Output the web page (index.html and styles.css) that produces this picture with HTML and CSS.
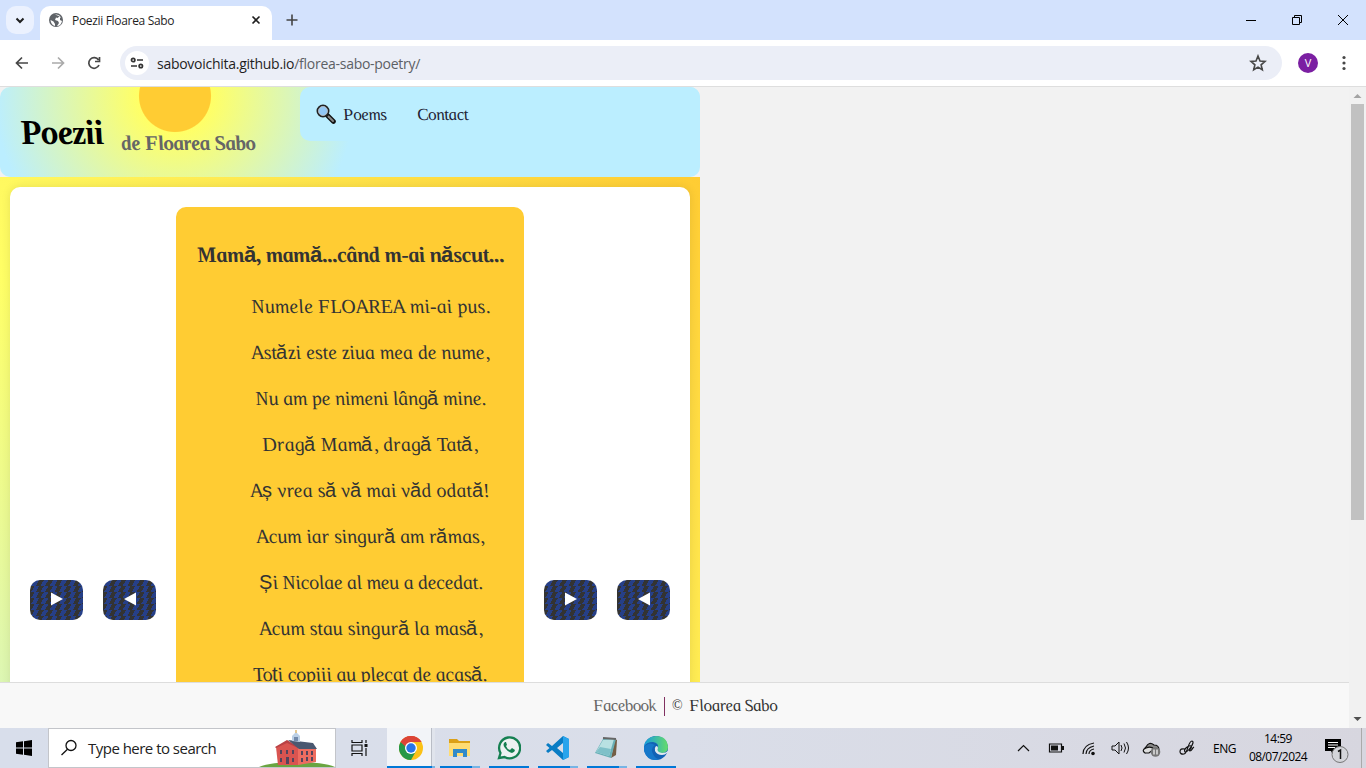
FILE: index.html
```html
<!DOCTYPE html>
<html lang="ro">
<head>
<meta charset="utf-8">
<title>Poezii Floarea Sabo</title>
<link rel="stylesheet" href="styles.css">
</head>
<body>
<div class="tabs">
  <div class="tab-search"><svg width="28" height="28"><path d="M10.500 12.500l3.500 3.500 3.500-3.500" fill="none" stroke="#1f1f1f" stroke-width="2"/></svg></div>
  <div class="tab">
    <svg class="globe" width="14" height="14"><circle cx="7" cy="7" r="7" fill="#5f6368"/><path d="M6 1.5Q9 1 11 3L8.5 5 7 4.5 6 7l3 1 1 2-2 3q4 0 5-5l-2-1V5l1-1M1.5 7l3 1.5L6 11v2Q2 12 1.5 7" fill="#fff"/></svg>
    <span class="tab-title">Poezii Floarea Sabo</span>
    <svg class="tab-x" width="10" height="10"><path d="M1.5 1.5l7 7m0-7l-7 7" stroke="#1f1f1f" stroke-width="1.6"/></svg>
  </div>
  <svg class="plus" width="12" height="12"><path d="M6 .5v11M.5 6h11" stroke="#444" stroke-width="1.6"/></svg>
  <svg class="winctl" width="120" height="40" fill="none" stroke="#000"><path d="M10 20.500h10M102 15l10 10m0-10l-10 10"/><path d="M56.500 17.500h7v7h-7zM58.500 17v-1.500h7v7h-1.500"/></svg>
</div>
<div class="toolbar">
  <svg class="navicons" width="92" height="20" fill="none" stroke="#474747" stroke-width="1.7"><path d="M13 10H1.500M7 4.500L1.500 10 7 15.500"/><path d="M37 10h11.500M43 4.500l5.500 5.500-5.500 5.500" stroke="#aaa"/><path d="M83.500 7A5.300 5.300 0 1 0 84 12M84.500 4v4.500H80"/></svg>
  <div class="omnibox">
    <div class="tune"><svg width="14" height="12" fill="none" stroke="#333" stroke-width="1.700"><circle cx="3.200" cy="3" r="1.700"/><path d="M7 3h6M1 9h6"/><circle cx="10.800" cy="9" r="1.700"/></svg></div>
    <span class="url">sabovoichita.github.io<span class="path">/florea-sabo-poetry/</span></span>
    <svg class="star" width="18" height="18"><path d="M9 2l2 5 5 .4-3.900 3.400 1.200 5L9 13.100l-4.300 2.700 1.200-5L2 7.400 7 7z" fill="none" stroke="#474747" stroke-width="1.600"/></svg>
  </div>
  <span class="avatar">V</span>
  <svg class="dots" width="6" height="18" fill="#474747"><circle cx="3" cy="3.500" r="1.600"/><circle cx="3" cy="9" r="1.600"/><circle cx="3" cy="14.500" r="1.600"/></svg>
</div>
<div class="viewport">
  <div class="page">
    <div class="content">
      <header class="head">
        <h1 class="brand"><span class="script">Poezii</span></h1>
        <h2 class="author"><span class="script">de Floarea Sabo</span></h2>
        <nav class="nav">
          <svg width="20" height="20"><path d="M11.500 11.500l6 6" stroke="#111" stroke-width="4.600" stroke-linecap="round"/><path d="M12.500 12.500l4.500 4.500" stroke="#888" stroke-width="2" stroke-linecap="round"/><circle cx="7" cy="7" r="5.600" fill="#92c7f5" stroke="#222" stroke-width="1.800"/><circle cx="7" cy="7" r="4.500" fill="none" stroke="#bbb" stroke-width=".8"/></svg>
          <a class="link poems"><span class="script">Poems</span></a><a class="link contact"><span class="script">Contact</span></a>
        </nav>
      </header>
      <main class="main">
        <div class="card">
          <div class="buttons"><button class="btn"><svg width="12" height="14"><path d="M0 .5v13L12 7z" fill="#fff"/></svg></button><button class="btn"><svg width="12" height="14"><path d="M12 .5v13L0 7z" fill="#fff"/></svg></button></div>
          <article class="poem">
            <h3 class="poem-title"><span class="script">Mam<i>ă</i>, mam<i>ă</i>...când m-ai n<i>ă</i>scut...</span></h3>
            <p class="line l1"><span class="script">Numele FLOAREA mi-ai pus.</span></p>
            <p class="line l2"><span class="script">Ast<i>ă</i>zi este ziua mea de nume,</span></p>
            <p class="line l3"><span class="script">Nu am pe nimeni lâng<i>ă</i> mine.</span></p>
            <p class="line l4"><span class="script">Drag<i>ă</i> Mam<i>ă</i>, drag<i>ă</i> Tat<i>ă</i>,</span></p>
            <p class="line l5"><span class="script">A<i>ș</i> vrea s<i>ă</i> v<i>ă</i> mai v<i>ă</i>d odat<i>ă</i>!</span></p>
            <p class="line l6"><span class="script">Acum iar singur<i>ă</i> am r<i>ă</i>mas,</span></p>
            <p class="line l7"><span class="script"><i>Ș</i>i Nicolae al meu a decedat.</span></p>
            <p class="line l8"><span class="script">Acum stau singur<i>ă</i> la mas<i>ă</i>,</span></p>
            <p class="line l9"><span class="script">To<i>ț</i>i copiii au plecat de acas<i>ă</i>.</span></p>
          </article>
          <div class="buttons"><button class="btn"><svg width="12" height="14"><path d="M0 .5v13L12 7z" fill="#fff"/></svg></button><button class="btn"><svg width="12" height="14"><path d="M12 .5v13L0 7z" fill="#fff"/></svg></button></div>
        </div>
      </main>
    </div>
    <footer class="foot"><a class="fb"><span class="script">Facebook</span></a><span class="bar"></span><span class="copy">©</span><span class="owner script">Floarea Sabo</span></footer>
  </div>
  <div class="scroll"><svg width="17" height="17"><path d="M4.500 11h8l-4-4z" fill="#a3a3a3"/></svg><div class="thumb"></div><svg class="down" width="17" height="17"><path d="M4.500 6h8l-4 4z" fill="#505050"/></svg></div>
</div>
<div class="taskbar">
  <svg class="win" width="16" height="16"><path d="M0 2.300L7 1.300v6.200H0zM8 1.200L16 0v7.500H8zM0 8.500h7v6.200l-7-1zM8 8.500h8V16l-8-1.200z"/></svg>
  <div class="search">
    <svg width="18" height="18" fill="none" stroke="#111" stroke-width="1.300"><circle cx="11" cy="6.500" r="5"/><path d="M7.500 10.200L1.500 16"/></svg>
    <span class="search-text">Type here to search</span>
    <svg class="hall" width="76" height="38"><path d="M0 38q12-5 38-5 26 0 38 5z" fill="#6aa541"/><path d="M17 18l11-5 11 5v18H19z" fill="#d95450"/><path d="M16 18l12-7 12 7-1 1-11-5-11 5z" fill="#b94245"/><path d="M39 19h18v14l-18 3z" fill="#ed6c60"/><path d="M29 11l25 3 4 6H40z" fill="#4a5870"/><path d="M33 12V7l2-2q2-3 4 0l2 2v6z" fill="#bcd0e5"/><path d="M37 4V1" stroke="#d4a64b" stroke-width="1.200"/><path d="M35 8h4v4h-4z" fill="#7189aa"/><g fill="#54445c"><path d="M21 21h2v4h-2zM27 21h2v4h-2zM33 21h2v4h-2zM21 29h2v4h-2zM27 28h3v7h-3zM33 29h2v4h-2zM42 22h2v4h-2zM47 22h2v4h-2zM52 22h2v4h-2zM42 29h2v4h-2zM47 28h2v4h-2zM52 28h2v4h-2z"/></g></svg>
  </div>
  <svg class="taskview" width="18" height="16" fill="none" stroke="#111" stroke-width="1.200"><path d="M1 0v2.500h10V0M1 16v-2.500h10V16M1 5h10v6H1zM15 0v3M15 8v8"/><path d="M13.500 4h3v3h-3z" fill="#111" stroke="none"/></svg>
  <div class="apps">
    <div class="app chrome"><svg width="24" height="24"><circle cx="12" cy="12" r="12" fill="#fbc116"/><path d="M12 12L1.600 6A12 12 0 0 1 22.400 6H12z" fill="#dc4437"/><path d="M1.600 6A12 12 0 0 0 12 24l5-9-5-3z" fill="#279847"/><path d="M1.600 6A12 12 0 0 1 22.400 6H12L7 11z" fill="#dc4437"/><circle cx="12" cy="12" r="6" fill="#fff"/><circle cx="12" cy="12" r="4.700" fill="#2874e8"/></svg></div>
    <div class="app"><svg width="24" height="24"><path d="M1 3h8l2 2h11v15H1z" fill="#dba017"/><path d="M1 7h21v13H1z" fill="#ffdc72"/><path d="M5 13h14v8h-4v-4H9v4H5z" fill="#318ac9"/></svg></div>
    <div class="app plain"><svg width="24" height="24"><path d="M2 22l1.500-5A10.500 10.500 0 1 1 7.500 21z" fill="#edf2f2" stroke="#168052" stroke-width="2.300"/><path d="M8 6q-3 2 0 6 3 4 7 5 3-1 3-3l-3-2-2 2q-3-1-4-4l1-1-1-3z" fill="#168052"/></svg></div>
    <div class="app"><svg width="24" height="24"><path d="M17 0l6 3v18l-6 3L6 14l-4 3-2-2 3.500-3L0 9l2-2 4 3zM17 7l-6 5 6 5z" fill="#087cc4" fill-rule="evenodd"/><path d="M17 0l6 3v18l-6 3z" fill="#28a4ec"/></svg></div>
    <div class="app"><svg width="24" height="24"><path d="M20 3l2 1-1 15-5 3z" fill="#745e45"/><path d="M8 3l13 0-5 19-16-5z" fill="#68afb6"/><path d="M8 4l11-1-5 17L1 16z" fill="#b9e1e2"/><path d="M5 11l11 2-2 7-13-4z" fill="#7fc0c8"/><path d="M8 2l13 1" stroke="#666" stroke-width="2"/></svg></div>
    <div class="app plain"><svg width="24" height="24"><defs><linearGradient id="e" x2="1"><stop stop-color="#159cdf"/><stop offset="1" stop-color="#66dc6a"/></linearGradient></defs><circle cx="12" cy="12" r="12" fill="#1262b5"/><path d="M0 11Q1 1 12 0q11 0 12 11 0 6-7 6-6-1-3-5 1-5-5-6-7 0-9 5z" fill="url(#e)"/><path d="M0 11q5-6 11-2-5 3-2 9 2 5 7 5-12 4-16-8z" fill="#1678ca"/><path d="M12 10q-2 2-1 5 2 4 7 4 3 0 5-2l1-1v-1q-2 2-6 2-6-1-4-5 0-2-2-2z" fill="#e3e9ef"/></svg></div>
  </div>
  <svg class="tray" width="184" height="24" fill="none" stroke="#111" stroke-width="1.200"><path d="M2 15l5.500-5.500L13 15"/><path d="M33.500 8h12v8h-12z"/><path d="M35 9.500h7v5h-7zM46 10h2v4h-2z" fill="#111" stroke="none"/><path d="M67 18Q67 9 78 7M70 18q0-6 8-8M73 18q0-4 5-5"/><circle cx="77" cy="17.500" r="1.200" fill="#111"/><path d="M96 10h3l4-4v12l-4-4h-3zM105 9q2 3 0 6M108 7.500q3 4.500 0 9M110.500 6q4 6 0 12" stroke-width="1"/><path d="M130 17q-4-3 0-6 3-6 8-2 5 0 5 5" fill="#888"/><path d="M133 17h-4q-4-3 1-5 5-2 8 1z" fill="#ddd"/><circle cx="139.500" cy="16" r="4.800" fill="#777" stroke="none"/><path d="M138 13.500v5M141 13.500v5" stroke="#fff"/><path d="M169 13q-5-1-5 2.500 0 3 4 2.500c4-1 4-13 8-13 4 1-5 12-7 11-2-3 4-7 6-6 2 2-3 4-1 5 2 0 2-3 4-4"/></svg>
  <span class="lang">ENG</span>
  <div class="clock"><span class="time">14:59</span><span class="date">08/07/2024</span></div>
  <svg class="note" width="26" height="28"><path d="M1 3h16v12h-4l-4 4-2-4H1z"/><path d="M4 6.500h10M4 9h10M4 11.500h7" stroke="#fff"/><circle cx="16" cy="18.500" r="8" fill="#d4d5da" stroke="#777"/><path d="M14 15.500l2.500-1.500v9" fill="none" stroke="#111" stroke-width="1.500"/></svg>
  <div class="desktop"></div>
</div>
</body>
</html>
```
FILE: styles.css
```css
* { box-sizing: border-box; }
body { margin: 0; width: 1366px; height: 768px; overflow: hidden; font-family: "Open Sans", sans-serif; background: #fff; }
svg { display: block; flex: none; }
.tabs { height: 40px; background: #d3e2fd; display: flex; align-items: center; padding-left: 6px; }
.tab-search { width: 28px; height: 28px; border-radius: 10px; background: #ebf1fe; }
.tab { width: 232px; height: 34px; margin: 6px 0 0 6px; background: #fff; border-radius: 10px 10px 0 0; display: flex; align-items: center; padding: 0 11px 6px 9px; }
.tab-title { margin-left: 9px; font-size: 12px; letter-spacing: -.32px; color: #1f1f1f; white-space: nowrap; }
.tab-x { margin-left: auto; }
.plus { margin-left: 14px; }
.winctl { margin-left: auto; margin-right: 10px; }
.toolbar { height: 47px; border-bottom: 1px solid #dedede; display: flex; align-items: center; padding-left: 15px; }
.navicons { margin-right: 13px; }
.omnibox { width: 1162px; height: 34px; border-radius: 17px; background: #ebeef7; display: flex; align-items: center; padding: 0 15px 0 5px; }
.tune { width: 24px; height: 24px; border-radius: 50%; background: #fff; display: grid; place-items: center; }
.url { margin-left: 8px; font-size: 14px; color: #1f1f1f; letter-spacing: -.27px; white-space: nowrap; }
.path { color: #5c6065; }
.star { margin-left: auto; }
.avatar { width: 20px; height: 20px; margin-left: 16px; border-radius: 50%; background: #7b1fa2; color: #fff; font-size: 11px; line-height: 20px; text-align: center; }
.dots { margin-left: 23px; }
.viewport { height: 641px; display: flex; background: #f2f2f2; }
.page { width: 1349px; display: flex; flex-direction: column; font-family: "Liberation Serif", serif; font-style: italic; }
.content { flex: 1; min-height: 0; overflow: hidden; width: 700px; }
/* Straightens the italic letterforms into an upright cursive. */
.script { display: inline-block; transform: skewX(13deg); }
.script i { display: inline-block; transform: skewX(-13deg); font-family: "Liberation Sans", sans-serif; font-style: normal; }
.head { height: 90px; border-radius: 10px; display: flex; background: radial-gradient(180px circle at 175px 9px, #ffcc33 19.700%, #ffff66 20.300%, #bbeeff 100%); }
.brand { width: 101px; margin: 26px 0 0 20px; font-size: 35px; line-height: 40px; letter-spacing: -.800px; color: #000; white-space: nowrap; }
.author { width: 179px; margin: 44px 0 0; font-size: 21px; line-height: 24px; letter-spacing: -.550px; color: #666; white-space: nowrap; }
.nav { width: 400px; height: 54px; border-radius: 10px; background: #bbeeff; display: flex; align-items: center; padding-left: 16px; }
.link { padding-top: 2px; font-size: 17px; color: #223; letter-spacing: -.400px; white-space: nowrap; }
.poems { width: 74px; margin-left: 7px; }
.main { height: 900px; padding: 10px; background: linear-gradient(225deg, #ffcc33, #ffff66, #bbeeff); }
.card { height: 880px; border-radius: 10px; background: #fff; padding: 20px; display: flex; justify-content: space-between; box-shadow: 0 0 10px rgba(0,0,0,.1); }
.buttons { display: flex; gap: 20px; padding-top: 373px; }
.btn { width: 53px; height: 40px; border: 0; padding: 0 0 3px; border-radius: 10px; display: grid; place-items: center; background: repeating-linear-gradient(120deg, #333 0 4px, #263f87 4px 8px) 0 0 / 100% 6px; }
.poem { width: 348px; height: 840px; border-radius: 10px; background: #ffcc33; padding-top: 34px; color: #333; }
.poem-title { margin: 0 0 14px; font-size: 22px; line-height: 28px; letter-spacing: -.390px; text-align: center; white-space: nowrap; }
.line { margin: 0 0 0 40px; height: 46px; font-size: 20px; line-height: 46px; text-align: center; white-space: nowrap; }
.l1 { letter-spacing: .060px; }
.l2 { letter-spacing: -.070px; }
.l3 { letter-spacing: -.230px; }
.l6 { letter-spacing: -.150px; }
.l7 { letter-spacing: -.330px; }
.l8 { letter-spacing: -.080px; }
.l9 { letter-spacing: -.260px; }
.foot { height: 46px; border-top: 1px solid #ddd; background: #f8f8f8; display: flex; align-items: center; padding-left: 593px; font-size: 17px; color: #333; white-space: nowrap; }
.fb { width: 71px; color: #666; letter-spacing: -.600px; }
.bar { width: 1px; height: 19px; margin: 2px 7px 0 0; background: #803060; }
.copy { width: 17px; font-size: 14px; font-style: normal; }
.owner { letter-spacing: -.350px; }
.scroll { width: 17px; background: #f1f1f1; display: flex; flex-direction: column; }
.thumb { width: 13px; height: 416px; margin-left: 2px; background: #c1c1c1; }
.down { margin-top: auto; }
.taskbar { height: 40px; background: linear-gradient(90deg, #d8deeb, #dadee9 50%, #d7d6df); display: flex; align-items: center; }
.win { margin: 0 16px; }
.search { width: 288px; height: 40px; border: 1px solid #c3c5ca; background: #fff; display: flex; align-items: center; padding-left: 11px; }
.search-text { margin-left: 10px; font-size: 15px; letter-spacing: -.520px; color: #222; white-space: nowrap; }
.hall { margin: 0 0 0 auto; }
.taskview { margin-left: 15px; }
.apps { margin-left: 18px; display: flex; gap: 9px; height: 40px; }
.app { width: 40px; height: 40px; padding: 8px 0 0 8px; background: linear-gradient(90deg, #0078d7 32px, #76b4e5 32px) 0 100% / 100% 2px no-repeat; }
.app.plain { background: linear-gradient(#0078d7, #0078d7) 0 100% / 100% 2px no-repeat; }
.app.chrome { width: 48px; margin-right: -4px; padding-left: 12px; background: linear-gradient(90deg, #0078d7 45px, #76b4e5 45px) 0 100% / 100% 2px no-repeat, linear-gradient(90deg, #f2f4f8 44px, #b9bdc6 44px 45px, #e0e4ec 45px); }
.tray { margin-left: auto; }
.lang { width: 24px; margin-left: 13px; font-size: 12px; letter-spacing: -.500px; }
.clock { width: 60px; margin-left: 11px; display: flex; flex-direction: column; align-items: center; font-size: 12px; line-height: 18px; letter-spacing: -.550px; white-space: nowrap; }
.note { margin: 4px 0 0 16px; }
.desktop { width: 5px; height: 40px; margin-left: 11px; border-left: 1px solid #aaa; }
```
